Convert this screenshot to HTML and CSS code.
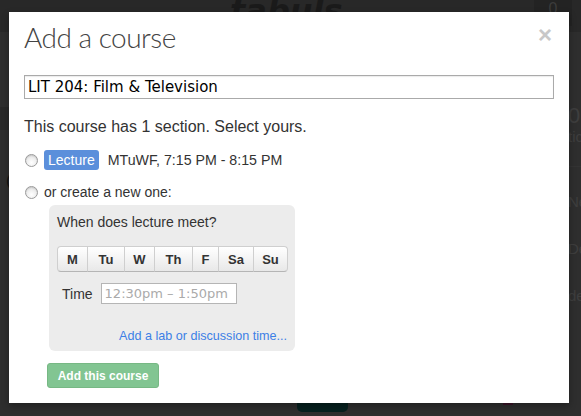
FILE: index.html
```html
<!DOCTYPE html>
<html>
<head>
<meta charset="utf-8">
<link rel="stylesheet" href="styles.css">
</head>
<body>
<div class="page">
  <div class="topbar">
    <div class="logo">tabuls</div>
    <div class="count">0</div>
  </div>
  <div class="bgcontent">
    <div class="leftcol"><div class="leftband"></div><span class="paren">(</span></div>
    <div class="rightcol">
      <div class="rrow big">0</div>
      <div class="rrow">tic</div>
      <div class="rline"></div>
      <div class="rrow gap">Ne</div>
      <div class="rrow gap">De</div>
      <div class="rrow gap">dea</div>
    </div>
  </div>
  <div class="bottomstrip"><div class="teal"></div><div class="plum"></div></div>
</div>

<div class="modal">
  <div class="modal-header">
    <h3 class="title">Add a course</h3>
    <span class="close">&times;</span>
  </div>
  <div class="modal-body">
    <div class="course-input">LIT 204: Film &amp; Television</div>
    <p class="lead">This course has 1 section. Select yours.</p>
    <label class="option first">
      <span class="radio"></span>
      <span class="badge">Lecture</span>
      <span class="when">MTuWF, 7:15 PM - 8:15 PM</span>
    </label>
    <label class="option second">
      <span class="radio"></span>
      <span class="or">or create a new one:</span>
    </label>
    <div class="panel">
      <div class="question">When does lecture meet?</div>
      <div class="days">
        <span class="day d-m">M</span><span class="day d-tu">Tu</span><span class="day d-w">W</span><span class="day d-th">Th</span><span class="day d-f">F</span><span class="day d-sa">Sa</span><span class="day d-su">Su</span>
      </div>
      <div class="time-row">
        <span class="time-label">Time</span>
        <span class="time-input">12:30pm – 1:50pm</span>
      </div>
      <div class="link-row"><a class="lab-link">Add a lab or discussion time...</a></div>
    </div>
    <button class="add-btn">Add this course</button>
  </div>
</div>
</body>
</html>
```
FILE: styles.css
```css
* { box-sizing: border-box; }
html, body { margin: 0; padding: 0; }
body {
  width: 581px;
  height: 416px;
  overflow: hidden;
  background: #2e2e2e;
  font-family: "Liberation Sans", Arial, sans-serif;
  position: relative;
}
.page { width: 581px; height: 416px; display: flex; flex-direction: column; }
.topbar {
  height: 32px;
  background: #282828;
  display: flex;
  justify-content: space-between;
  align-items: flex-start;
  padding: 0 9px 0 230px;
}
.logo {
  font-family: "DejaVu Sans", sans-serif;
  font-weight: bold;
  font-style: italic;
  font-size: 32px;
  line-height: 22px;
  color: #1a1a1a;
}
.count {
  width: 38px;
  height: 26px;
  background: #232323;
  color: #3c3c3c;
  font-size: 16px;
  text-align: center;
  line-height: 18px;
}
.bgcontent { flex: 1; display: flex; }
.leftcol { width: 9px; padding-top: 75px; position: relative; }
.leftband { height: 23px; background: #282828; }
.paren { position: absolute; left: 6px; top: 140px; color: #111; font-size: 16px; }
.rightcol { margin-left: auto; width: 12px; padding-top: 72px; color: #3e3e3e; font-size: 15px; overflow: hidden; white-space: nowrap; }
.rrow { line-height: 18px; margin-left: -1px; }
.rrow.big { font-size: 22px; line-height: 24px; }
.rline { height: 1px; background: #333; margin: 20px 0 26px; }
.rrow.gap { margin-bottom: 29px; }
.bottomstrip { height: 13px; display: flex; position: relative; }
.teal { position: absolute; left: 297px; top: -6px; width: 51px; height: 15px; background: #06201f; border-radius: 0 0 5px 5px; }
.plum { position: absolute; left: 503px; top: -6px; width: 10px; height: 8px; background: #3a1428; }

.modal {
  position: absolute;
  left: 9px;
  top: 12px;
  width: 560px;
  height: 391px;
  background: #fff;
  box-shadow: 0 3px 7px rgba(0,0,0,0.3);
  padding: 0 15px 0 15px;
}
.modal-header { display: flex; justify-content: space-between; align-items: flex-start; height: 52px; }
.title {
  margin: 8px 0 0 0;
  font-family: Lato, Roboto, "Liberation Sans", sans-serif;
  font-weight: 300;
  font-size: 28px;
  line-height: 34px;
  letter-spacing: -0.5px;
  color: #444;
}
.close {
  margin: 8px 2px 0 0;
  font-size: 24px;
  font-weight: bold;
  color: #c8c8c8;
  line-height: 30px;
}
.modal-body { display: flex; flex-direction: column; align-items: flex-start; padding-top: 11px; }
.course-input {
  width: 530px;
  height: 24px;
  border: 1px solid #aaa;
  box-shadow: inset 0 1px 1px rgba(0,0,0,0.08);
  font-family: "DejaVu Sans", sans-serif;
  font-size: 15px;
  line-height: 22px;
  padding-left: 3px;
  color: #000;
}
.lead { margin: 18px 0 0; font-size: 16px; line-height: 20px; color: #333; }
.option { display: flex; align-items: center; font-size: 14px; color: #333; height: 22px; }
.option.first { margin-top: 12px; }
.option.second { margin-top: 10px; }
.radio {
  width: 13px; height: 13px;
  border-radius: 50%;
  border: 1px solid #9a9a9a;
  background: radial-gradient(circle at 50% 70%, #fff 0, #f0f0f0 45%, #d6d6d6 100%);
  box-shadow: inset 0 1px 1px rgba(0,0,0,0.1);
  margin-left: 1px;
  margin-right: 6px;
}
.badge {
  background: #5b8fdb;
  color: #fff;
  border-radius: 3px;
  padding: 0 4px;
  height: 20px;
  line-height: 20px;
  font-size: 14px;
  margin-right: 9px;
}
.when { font-size: 14.2px; }
.panel {
  margin: 2px 0 0 25px;
  width: 246px;
  height: 146px;
  background: #ececec;
  border-radius: 6px;
  padding: 8px 7px 0 8px;
}
.question { font-size: 14px; line-height: 18px; color: #333; }
.days { display: flex; margin-top: 15px; }
.day {
  height: 26px;
  line-height: 26px;
  text-align: center;
  font-size: 13px;
  font-weight: bold;
  color: #333;
  background: linear-gradient(#ffffff, #e8e8e8);
  border: 1px solid #cfcfcf;
  border-bottom-color: #b5b5b5;
  margin-left: -1px;
  box-shadow: inset 0 1px 0 rgba(255,255,255,0.5);
}
.day:first-child { margin-left: 0; border-radius: 4px 0 0 4px; }
.day:last-child { border-radius: 0 4px 4px 0; }
.d-m { width: 31px; }
.d-tu { width: 38px; }
.d-w { width: 31px; }
.d-th { width: 39px; }
.d-f { width: 27px; }
.d-sa { width: 36px; }
.d-su { width: 35px; }
.time-row { display: flex; align-items: center; margin-top: 11px; padding-left: 5px; }
.time-label { font-size: 14px; color: #333; margin-right: 8px; }
.time-input {
  width: 136px;
  height: 21px;
  border: 1px solid #b5b5b5;
  background: #fff;
  font-family: "DejaVu Sans", sans-serif;
  font-size: 13px;
  line-height: 19px;
  color: #aaa;
  padding-left: 3px;
  white-space: nowrap;
}
.link-row { display: flex; justify-content: flex-end; margin-top: 24px; padding-right: 1px; }
.lab-link { color: #3d7fe6; font-size: 12.6px; line-height: 16px; }
.add-btn {
  margin: 12px 0 0 23px;
  width: 112px;
  height: 25px;
  border: 1px solid #77b884;
  border-radius: 3px;
  background: #82c592;
  color: #fff;
  font-family: "Liberation Sans", Arial, sans-serif;
  font-weight: bold;
  font-size: 12px;
  padding: 0;
}
```
